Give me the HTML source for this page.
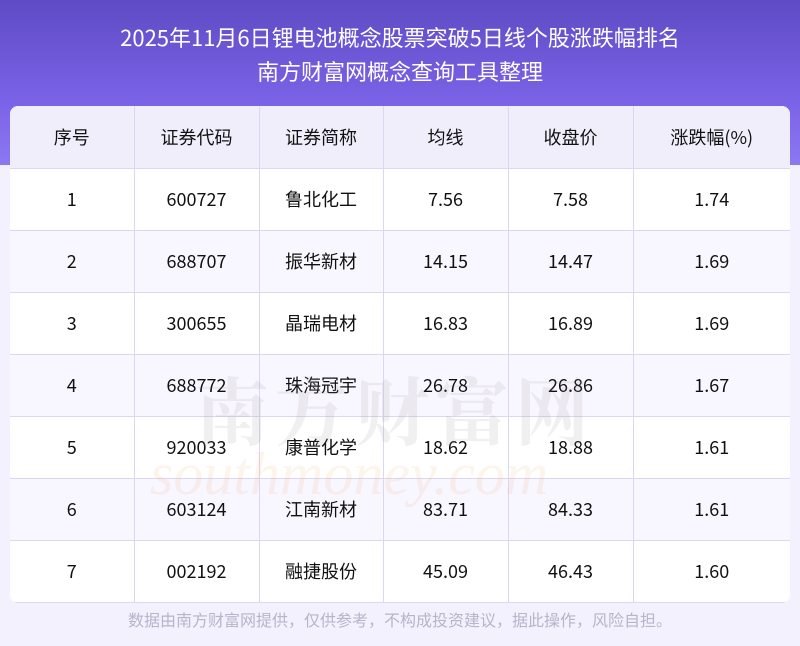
<!DOCTYPE html>
<html><head><meta charset="utf-8"><style>
*{margin:0;padding:0;box-sizing:border-box}
body{width:800px;height:646px;background:#f3f1fd;font-family:"DejaVu Sans","Noto Sans CJK SC",sans-serif;position:relative;overflow:hidden}
.hd{position:absolute;left:0;top:0;width:800px;height:165px;background:linear-gradient(180deg,#5f4bc4 0%,#7a62e6 60%,#8c78f2 100%)}
.t{position:absolute;left:0;width:800px;text-align:center;color:#fff;font-size:22px;font-family:"Noto Sans CJK SC",sans-serif;line-height:30px}
table{position:absolute;left:10px;top:106px;width:780px;border-collapse:collapse;background:#fff;border-radius:8px;overflow:hidden;font-size:18px;color:#111;font-family:"Noto Sans CJK SC",sans-serif}
td{height:62px;text-align:center;border:1px solid #dcd6f2;border-top:none;border-left:none;line-height:20px}
td:last-child{border-right:none}
tr:first-child td{background:#f1eefc;height:62px}
tr:nth-child(odd):not(:first-child) td{background:#f8f6fe}
.wm1{position:absolute;left:195px;top:355px;font-size:74px;color:rgba(150,140,140,.13);letter-spacing:6px;font-family:"Noto Serif CJK SC",serif;font-weight:bold}
.wm2{position:absolute;left:150px;top:440px;font-size:60px;color:rgba(240,170,110,.13);font-style:italic;font-family:"Liberation Serif",serif}
.ft{position:absolute;top:607px;left:0;width:800px;text-align:center;font-size:16px;color:#b9b3cb;font-family:"Noto Sans CJK SC",sans-serif}
</style></head><body>
<div class="hd"></div>
<div class="t" style="top:22px">2025年11月6日锂电池概念股票突破5日线个股涨跌幅排名</div>
<div class="t" style="top:56px">南方财富网概念查询工具整理</div>
<table>
<colgroup><col style="width:124px"><col style="width:125px"><col style="width:124px"><col style="width:125px"><col style="width:125px"><col></colgroup>
<tr><td>序号</td><td>证券代码</td><td>证券简称</td><td>均线</td><td>收盘价</td><td>涨跌幅(%)</td></tr>
<tr><td>1</td><td>600727</td><td>鲁北化工</td><td>7.56</td><td>7.58</td><td>1.74</td></tr>
<tr><td>2</td><td>688707</td><td>振华新材</td><td>14.15</td><td>14.47</td><td>1.69</td></tr>
<tr><td>3</td><td>300655</td><td>晶瑞电材</td><td>16.83</td><td>16.89</td><td>1.69</td></tr>
<tr><td>4</td><td>688772</td><td>珠海冠宇</td><td>26.78</td><td>26.86</td><td>1.67</td></tr>
<tr><td>5</td><td>920033</td><td>康普化学</td><td>18.62</td><td>18.88</td><td>1.61</td></tr>
<tr><td>6</td><td>603124</td><td>江南新材</td><td>83.71</td><td>84.33</td><td>1.61</td></tr>
<tr><td>7</td><td>002192</td><td>融捷股份</td><td>45.09</td><td>46.43</td><td>1.60</td></tr>
</table>
<div class="wm1">南方财富网</div>
<div class="wm2">southmoney.com</div>
<div class="ft">数据由南方财富网提供，仅供参考，不构成投资建议，据此操作，风险自担。</div>
</body></html>
